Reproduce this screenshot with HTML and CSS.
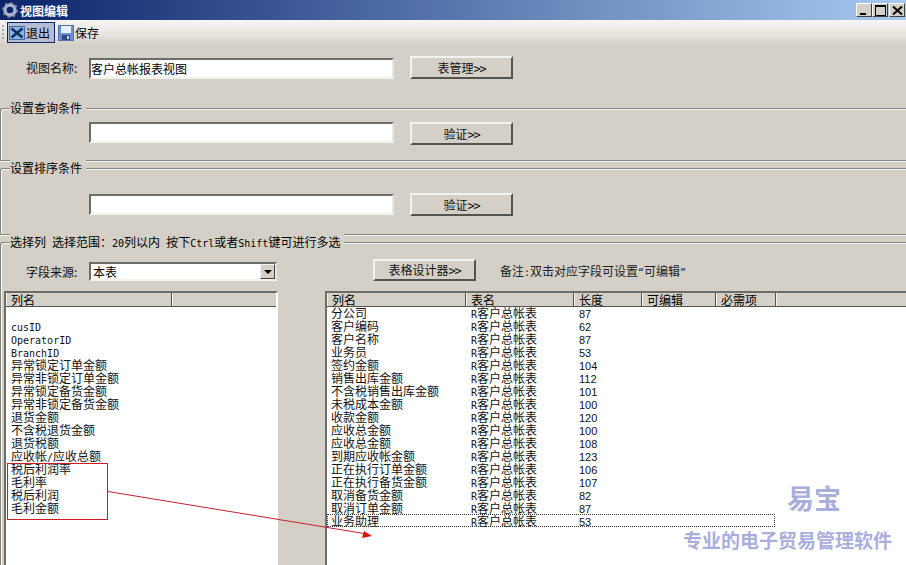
FILE: index.html
```html
<!DOCTYPE html>
<html>
<head>
    <title>视图编辑</title>
    <meta charset="utf-8">
    <link rel="stylesheet" href="styles.css">
</head>
<body>
    <div class="window">
        <div class="titlebar">
            <svg class="title-icon" width="16" height="16" viewBox="0 0 16 16">
                <circle cx="8" cy="8" r="5" fill="none" stroke="#aab2cc" stroke-width="3.4"/>
                <circle cx="8" cy="8" r="7" fill="none" stroke="#7f8aac" stroke-width="2" stroke-dasharray="2.4 3.1"/>
            </svg>
            <span class="title-text">视图编辑</span>
            <div class="win-buttons">
                <div class="win-btn"><span class="glyph-min"></span></div>
                <div class="win-btn"><span class="glyph-max"></span></div>
                <div class="win-btn win-close">
                    <svg width="11" height="11" viewBox="0 0 11 11"><path d="M1 1.5L10 9.5M10 1.5L1 9.5" stroke="#000" stroke-width="2"/></svg>
                </div>
            </div>
        </div>

        <div class="toolbar">
            <div class="grip"></div>
            <div class="tool tool-active">
                <svg width="16" height="16" viewBox="0 0 16 16">
                    <rect x="0.5" y="1.5" width="15" height="13" fill="#8db2e0" stroke="#3d6aa5"/>
                    <path d="M2.5 3.5L13.5 12.5M13.5 3.5L2.5 12.5" stroke="#12305f" stroke-width="2.6"/>
                </svg>
                <span>退出</span>
            </div>
            <div class="tool">
                <svg width="16" height="16" viewBox="0 0 16 16">
                    <rect x="0.5" y="0.5" width="15" height="15" fill="#6c90cc" stroke="#5273ab"/>
                    <rect x="3" y="1" width="10" height="7" fill="#e8eef8"/>
                    <rect x="4" y="10" width="8" height="5" fill="#2a4a80"/>
                    <rect x="9" y="11" width="2" height="3" fill="#cdd8ea"/>
                </svg>
                <span>保存</span>
            </div>
        </div>

        <div class="name-row">
            <label class="field-label">视图名称:</label>
            <div class="input">客户总帐报表视图</div>
            <div class="button">表管理<span class="arrows">&gt;&gt;</span></div>
        </div>

        <div class="group group-query">
            <div class="group-title"><span>设置查询条件</span></div>
            <div class="group-row">
                <div class="input"></div>
                <div class="button">验证<span class="arrows">&gt;&gt;</span></div>
            </div>
        </div>

        <div class="group group-sort">
            <div class="group-title"><span>设置排序条件</span></div>
            <div class="group-row">
                <div class="input"></div>
                <div class="button">验证<span class="arrows">&gt;&gt;</span></div>
            </div>
        </div>

        <div class="group group-columns">
            <div class="group-title"><span>选择列<i class="latin"> </i>选择范围：<i class="latin">20</i>列以内<i class="latin"> </i>按下<i class="latin">Ctrl</i>或者<i class="latin">Shift</i>键可进行多选</span></div>
            <div class="columns">
                <div class="col-left">
                    <div class="source-row">
                        <label class="field-label">字段来源:</label>
                        <div class="combo">
                            <span class="combo-text">本表</span>
                            <div class="combo-btn"><i></i></div>
                        </div>
                    </div>
                    <div class="list list-left">
                        <div class="list-head">
                            <div class="head-cell" style="width:166px">列名</div>
                            <div class="head-cell head-fill"></div>
                        </div>
                        <div class="rows rows-left">
                            <div class="row"></div>
                            <div class="row latin">cusID</div>
                            <div class="row latin">OperatorID</div>
                            <div class="row latin">BranchID</div>
                            <div class="row">异常锁定订单金额</div>
                            <div class="row">异常非锁定订单金额</div>
                            <div class="row">异常锁定备货金额</div>
                            <div class="row">异常非锁定备货金额</div>
                            <div class="row">退货金额</div>
                            <div class="row">不含税退货金额</div>
                            <div class="row">退货税额</div>
                            <div class="row">应收帐<span class="latin">/</span>应收总额</div>
                            <div class="row">税后利润率</div>
                            <div class="row">毛利率</div>
                            <div class="row">税后利润</div>
                            <div class="row">毛利金额</div>
                        </div>
                    </div>
                </div>
                <div class="col-right">
                    <div class="designer-row">
                        <div class="button button-designer">表格设计器<span class="arrows">&gt;&gt;</span></div>
                        <span class="note">备注<i class="latin">:</i>双击对应字段可设置<i class="latin">“</i>可编辑<i class="latin">”</i></span>
                    </div>
                    <div class="list list-right">
                        <div class="list-head">
                            <div class="head-cell" style="width:139px">列名</div>
                            <div class="head-cell" style="width:108px">表名</div>
                            <div class="head-cell" style="width:68px">长度</div>
                            <div class="head-cell" style="width:74px">可编辑</div>
                            <div class="head-cell" style="width:60px">必需项</div>
                            <div class="head-cell head-fill"></div>
                        </div>
                        <div class="rows">
                            <div class="row grid-row"><span>分公司</span><span><i class="latin">R</i>客户总帐表</span><span>87</span></div>
                            <div class="row grid-row"><span>客户编码</span><span><i class="latin">R</i>客户总帐表</span><span>62</span></div>
                            <div class="row grid-row"><span>客户名称</span><span><i class="latin">R</i>客户总帐表</span><span>87</span></div>
                            <div class="row grid-row"><span>业务员</span><span><i class="latin">R</i>客户总帐表</span><span>53</span></div>
                            <div class="row grid-row"><span>签约金额</span><span><i class="latin">R</i>客户总帐表</span><span>104</span></div>
                            <div class="row grid-row"><span>销售出库金额</span><span><i class="latin">R</i>客户总帐表</span><span>112</span></div>
                            <div class="row grid-row"><span>不含税销售出库金额</span><span><i class="latin">R</i>客户总帐表</span><span>101</span></div>
                            <div class="row grid-row"><span>未税成本金额</span><span><i class="latin">R</i>客户总帐表</span><span>100</span></div>
                            <div class="row grid-row"><span>收款金额</span><span><i class="latin">R</i>客户总帐表</span><span>120</span></div>
                            <div class="row grid-row"><span>应收总金额</span><span><i class="latin">R</i>客户总帐表</span><span>100</span></div>
                            <div class="row grid-row"><span>应收总金额</span><span><i class="latin">R</i>客户总帐表</span><span>108</span></div>
                            <div class="row grid-row"><span>到期应收帐金额</span><span><i class="latin">R</i>客户总帐表</span><span>123</span></div>
                            <div class="row grid-row"><span>正在执行订单金额</span><span><i class="latin">R</i>客户总帐表</span><span>106</span></div>
                            <div class="row grid-row"><span>正在执行备货金额</span><span><i class="latin">R</i>客户总帐表</span><span>107</span></div>
                            <div class="row grid-row"><span>取消备货金额</span><span><i class="latin">R</i>客户总帐表</span><span>82</span></div>
                            <div class="row grid-row"><span>取消订单金额</span><span><i class="latin">R</i>客户总帐表</span><span>87</span></div>
                            <div class="row grid-row row-focus"><span>业务助理</span><span><i class="latin">R</i>客户总帐表</span><span>53</span></div>
                        </div>
                    </div>
                </div>
            </div>
        </div>

        <div class="red-box"></div>
        <svg class="arrow" width="300" height="60" viewBox="0 0 300 60">
            <path d="M0 0.5L256 42.5" stroke="#c8202c" stroke-width="1" fill="none"/>
            <path d="M264 45L256 40L254 47Z" fill="#e01010"/>
        </svg>
        <div class="brand">
            <div class="brand-name">易宝</div>
            <div class="brand-slogan">专业的电子贸易管理软件</div>
        </div>
    </div>
</body>
</html>
```

FILE: styles.css
```css
html, body {
    margin: 0;
    padding: 0;
}
body {
    font-family: "Noto Sans CJK SC", "DejaVu Sans", sans-serif;
    font-size: 12px;
    color: #000;
    background: #d4d0c8;
}
.window {
    position: relative;
    width: 906px;
    height: 565px;
    overflow: hidden;
    background: #d4d0c8;
    display: flex;
    flex-direction: column;
}
/* half width latin, the way the old bitmap font draws it */
.latin {
    font-family: "DejaVu Sans Mono", monospace;
    font-size: 10px;
    font-style: normal;
    font-weight: normal;
}
.arrows {
    font-family: "DejaVu Sans Mono", monospace;
    font-size: 12px;
    letter-spacing: -1.2px;
}

/* title bar */
.titlebar {
    height: 20px;
    flex: none;
    display: flex;
    align-items: center;
    padding: 0 1px 0 2px;
    box-sizing: border-box;
    background: linear-gradient(90deg, #0a246a, #a6caf0);
    color: #fff;
}
.title-icon {
    flex: none;
    margin-right: 2px;
}
.title-text {
    font-weight: bold;
    font-size: 12px;
}
.win-buttons {
    margin-left: auto;
    display: flex;
}
.win-btn {
    width: 16px;
    height: 14px;
    background: #d4d0c8;
    box-sizing: border-box;
    border: 1px solid;
    border-color: #fff #404040 #404040 #fff;
    display: flex;
    align-items: center;
    justify-content: center;
}
.win-close {
    margin-left: 1px;
}
.glyph-min {
    width: 6px;
    height: 2px;
    background: #000;
    margin-top: 7px;
    margin-right: 2px;
}
.glyph-max {
    width: 9px;
    height: 8px;
    border: 1px solid #000;
    border-top-width: 2px;
}

/* toolbar */
.toolbar {
    height: 25px;
    flex: none;
    display: flex;
    align-items: center;
    background: linear-gradient(180deg, #f7f6f3, #e6e3dd 60%, #d4d0c8);
    padding-left: 2px;
    box-sizing: border-box;
}
.grip {
    width: 2px;
    height: 16px;
    margin-right: 3px;
    background: repeating-linear-gradient(180deg, #a8a8a8 0 2px, transparent 2px 4px);
}
.tool {
    display: flex;
    align-items: center;
    height: 21px;
    padding: 0 4px 0 1px;
    box-sizing: border-box;
    border: 1px solid transparent;
    gap: 1px;
}
.tool-active {
    background: #b6bdd2;
    border-color: #0a246a;
    margin-right: 1px;
}

/* form rows */
.field-label {
    width: 63px;
    flex: none;
    color: #111;
}
.name-row {
    display: flex;
    align-items: center;
    height: 23px;
    margin-top: 11px;
    padding-left: 26px;
    flex: none;
}
.name-row .input {
    margin-top: 2px;
}
.input {
    width: 305px;
    height: 21px;
    box-sizing: border-box;
    background: #fff;
    border: 2px solid;
    border-color: #6e6c66 #e8e6e0 #f4f3ee #6e6c66;
    line-height: 17px;
    flex: none;
}
.button {
    width: 103px;
    height: 23px;
    margin-left: 16px;
    box-sizing: border-box;
    background: #d4d0c8;
    border: 2px solid;
    border-color: #f4f3ee #55534e #55534e #f4f3ee;
    text-align: center;
    line-height: 19px;
    color: #111;
    flex: none;
}

/* group boxes */
.group {
    flex: none;
    box-sizing: border-box;
    border: 1px solid #85837d;
    border-right: 0;
    border-top-left-radius: 3px;
    box-shadow: inset 1px 1px 0 #f8f7f3, 0 1px 0 #f8f7f3;
}
.group-title {
    height: 13px;
    line-height: 13px;
    margin-top: -8px;
    padding-left: 9px;
}
.group-title span {
    background: #d4d0c8;
    padding: 0 4px 0 0;
    white-space: nowrap;
}
.group-row {
    display: flex;
    align-items: center;
    padding-left: 88px;
    height: 23px;
}
.group-query {
    margin-top: 29px;
    height: 53px;
}
.group-query .group-row {
    align-items: flex-start;
    margin-top: 8px;
}
.group-sort {
    margin-top: 7px;
    height: 67px;
}
.group-sort .group-row {
    margin-top: 19px;
}
.group-columns {
    margin-top: 7px;
    flex: 1;
    min-height: 0;
    border-bottom: 0;
    display: flex;
    flex-direction: column;
}

/* lower part */
.columns {
    flex: 1;
    display: flex;
    padding-left: 3px;
    padding-top: 1px;
    min-height: 0;
}
.col-left {
    width: 274px;
    flex: none;
    display: flex;
    flex-direction: column;
}
.col-right {
    flex: 1;
    margin-left: 47px;
    display: flex;
    flex-direction: column;
    min-width: 0;
}
.source-row {
    height: 19px;
    margin-top: 13px;
    margin-bottom: 10px;
    display: flex;
    align-items: center;
    padding-left: 22px;
    flex: none;
}
.combo {
    width: 188px;
    height: 19px;
    box-sizing: border-box;
    border: 2px solid;
    border-color: #6e6c66 #e8e6e0 #f4f3ee #6e6c66;
    background: #fff;
    display: flex;
    align-items: center;
    justify-content: space-between;
}
.combo-text {
    padding-left: 2px;
}
.combo-btn {
    width: 15px;
    height: 15px;
    box-sizing: border-box;
    background: #d4d0c8;
    border: 1px solid;
    border-color: #f4f3ee #404040 #404040 #f4f3ee;
    display: flex;
    align-items: center;
    justify-content: center;
}
.combo-btn i {
    width: 0;
    height: 0;
    border: 4px solid transparent;
    border-top: 4px solid #000;
    border-bottom: 0;
}
.designer-row {
    height: 22px;
    margin-top: 10px;
    margin-bottom: 10px;
    display: flex;
    align-items: center;
    padding-left: 48px;
    flex: none;
}
.button-designer {
    margin-left: 0;
    height: 22px;
    line-height: 18px;
}
.note {
    margin-left: 24px;
    color: #222;
}
.list {
    flex: 1;
    box-sizing: border-box;
    background: #fff;
    border: 2px solid;
    border-color: #6e6c66 #fff #fff #6e6c66;
    border-bottom: 0;
    min-height: 0;
    overflow: hidden;
}
.list-right {
    border-right: 0;
}
.list-head {
    display: flex;
    height: 14px;
    box-sizing: border-box;
    background: #d4d0c8;
    border-bottom: 1px solid #55534e;
}
.head-cell {
    flex: none;
    box-sizing: border-box;
    height: 13px;
    padding-left: 4px;
    line-height: 13px;
    border-right: 1px solid #55534e;
    border-left: 1px solid #f4f3ee;
}
.head-fill {
    flex: 1;
    border-right: 0;
}
.rows {
    margin-top: -1px;
}
.rows-left {
    padding-left: 5px;
}
.row {
    height: 13px;
    line-height: 13px;
    white-space: nowrap;
    font-size: 12px;
    color: #111;
}
.row.latin {
    font-size: 10px;
    line-height: 17px;
}
.grid-row {
    display: flex;
    padding-left: 4px;
    width: 448px;
    box-sizing: border-box;
}
.grid-row span:nth-child(1) {
    width: 140px;
    flex: none;
}
.grid-row span:nth-child(2) {
    width: 108px;
    flex: none;
}
.grid-row span:nth-child(3) {
    font-family: "Liberation Sans", sans-serif;
    font-size: 11px;
    line-height: 17px;
}
.row-focus {
    outline: 1px dotted #333;
    outline-offset: -1px;
}

/* annotations on top of the screenshot */
.red-box {
    position: absolute;
    left: 7px;
    top: 463px;
    width: 101px;
    height: 57px;
    box-sizing: border-box;
    border: 1px solid #d01a24;
}
.arrow {
    position: absolute;
    left: 108px;
    top: 491px;
}
.brand {
    position: absolute;
    left: 683px;
    top: 483px;
    width: 208px;
    color: #a9aedd;
    font-weight: bold;
    text-align: center;
}
.brand-name {
    font-size: 27px;
    line-height: 30px;
    width: 262px;
}
.brand-slogan {
    font-size: 19px;
    line-height: 24px;
    margin-top: 15px;
    white-space: nowrap;
}
```
